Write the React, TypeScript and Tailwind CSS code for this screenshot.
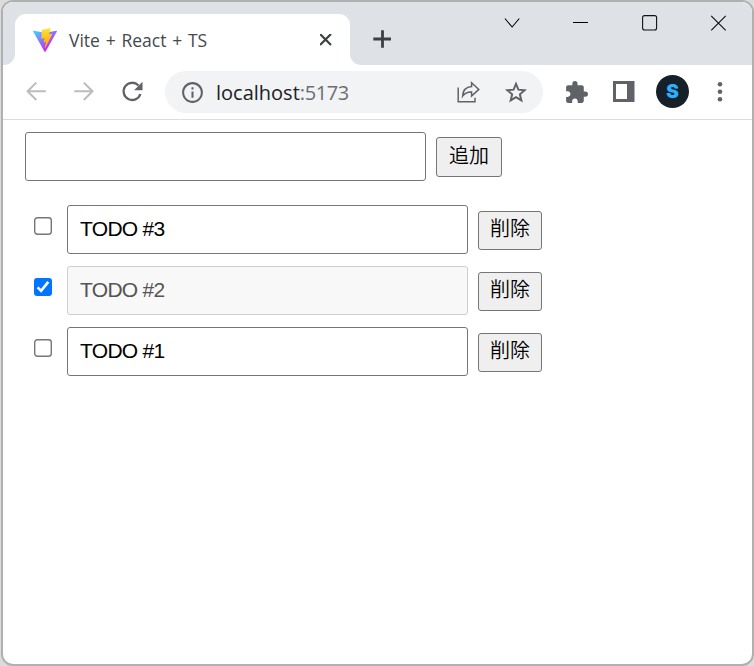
import { useState } from "react";
import { clsx } from "clsx";
import { MdExtension, MdInfoOutline } from "react-icons/md";

interface Todo {
  id: number;
  value: string;
  checked: boolean;
}

const initialTodos: Todo[] = [
  { id: 3, value: "TODO #3", checked: false },
  { id: 2, value: "TODO #2", checked: true },
  { id: 1, value: "TODO #1", checked: false },
];

function ViteLogo() {
  return (
    <svg className="ml-[18px] h-6 w-6 shrink-0" viewBox="0 0 256 257">
      <defs>
        <linearGradient id="viteBlue" x1="-.8%" x2="57.6%" y1="7.7%" y2="78.4%">
          <stop offset="0%" stopColor="#41D1FF" />
          <stop offset="100%" stopColor="#BD34FE" />
        </linearGradient>
        <linearGradient id="viteBolt" x1="43.4%" x2="50.3%" y1="2.2%" y2="89%">
          <stop offset="0%" stopColor="#FFEA83" />
          <stop offset="8.3%" stopColor="#FFDD35" />
          <stop offset="100%" stopColor="#FFA800" />
        </linearGradient>
      </defs>
      <path
        fill="url(#viteBlue)"
        d="M255.153 37.938L134.897 252.976c-2.483 4.44-8.862 4.466-11.382.048L.875 37.958c-2.746-4.814 1.371-10.646 6.827-9.67l120.385 21.517a6.537 6.537 0 0 0 2.322-.004l117.867-21.483c5.438-.991 9.574 4.796 6.877 9.62Z"
      />
      <path
        fill="url(#viteBolt)"
        d="M185.432.063L96.44 17.501a3.268 3.268 0 0 0-2.634 3.014l-5.474 92.456a3.268 3.268 0 0 0 3.997 3.378l24.777-5.718c2.318-.535 4.413 1.507 3.936 3.838l-7.361 36.047c-.495 2.426 1.782 4.5 4.151 3.78l15.304-4.649c2.372-.72 4.652 1.36 4.15 3.788l-11.698 56.621c-.732 3.542 3.979 5.473 5.943 2.437l1.313-2.028l72.516-144.72c1.215-2.423-.88-5.186-3.54-4.672l-25.505 4.922c-2.396.462-4.435-1.77-3.759-4.114l16.646-57.705c.677-2.35-1.37-4.583-3.769-4.113Z"
      />
    </svg>
  );
}

function TabBar() {
  return (
    <div className="flex h-[63px] bg-white">
      <div className="w-3 rounded-br-[11px] bg-[#dee1e6]" />
      <div className="w-[335px] bg-[#dee1e6] pt-3">
        <div className="flex h-full items-center rounded-t-[11px] bg-white">
          <ViteLogo />
          <span className="ml-3 w-[240px] whitespace-pre font-['Open_Sans',sans-serif] text-[17.5px] leading-6 text-[#45494d] [word-spacing:1.2px]">
            Vite + React + TS
          </span>
          <svg className="ml-[11px] h-3 w-3" viewBox="0 0 12 12">
            <path d="M0 0l11 11M11 0L0 11" stroke="#3c4043" strokeWidth="2.2" />
          </svg>
        </div>
      </div>
      <div className="flex flex-1 justify-between rounded-bl-[11px] bg-[#dee1e6]">
        <svg className="ml-[23px] mt-7 h-[18px] w-[18px]" viewBox="0 0 18 18">
          <path d="M9.5.2v17.6M.3 9h17.8" stroke="#3c4043" strokeWidth="2.8" />
        </svg>
        <div className="mr-[25px] mt-[13px] flex gap-[53px]">
          <svg className="h-4 w-4" viewBox="0 0 16 16" fill="none" stroke="#000" strokeWidth="1.1">
            <path d="M.9 3.500l7.200 8.500 7.200-8.500" />
          </svg>
          <svg className="h-4 w-4" viewBox="0 0 16 16" fill="none" stroke="#000">
            <path d="M0 7.500h15" />
          </svg>
          <svg className="h-4 w-4" viewBox="0 0 16 16" fill="none" stroke="#111">
            <rect x=".6" y=".6" width="14" height="14.400" rx="2" strokeWidth="1.1" />
          </svg>
          <svg className="h-4 w-4" viewBox="0 0 16 16" fill="none" stroke="#111" strokeWidth="1.1">
            <path d="M.2 .8l14.500 14.500M14.700 .8L.2 15.300" />
          </svg>
        </div>
      </div>
    </div>
  );
}

function Toolbar() {
  return (
    <div className="flex h-[55px] items-center border-b border-[#dadce0] bg-white text-[#5f6368]">
      <svg className="ml-[23px] h-5 w-5" viewBox="0 0 20 20" fill="none" stroke="#babcbe" strokeWidth="2">
        <path d="M19.800 9.300H1.800M10.300.6L1.600 9.300l8.700 8.700" />
      </svg>
      <svg className="ml-7 h-5 w-5" viewBox="0 0 20 20" fill="none" stroke="#babcbe" strokeWidth="2">
        <path d="M.3 9.300h18M9.800.6l8.700 8.700-8.700 8.700" />
      </svg>
      <svg className="ml-[27px] h-[22px] w-[22px]" viewBox="0 0 22 22">
        <path
          d="M19.400 13A8.600 8.600 0 1 1 17.500 4.500"
          fill="none"
          stroke="#5f6368"
          strokeWidth="2.3"
        />
        <path d="M21.500 .8v8.400h-8.400z" fill="#5f6368" />
      </svg>
      <div className="ml-[22px] flex h-[42px] w-[378px] items-center rounded-full bg-[#f1f3f4]">
        <MdInfoOutline className="ml-[15px] h-[25px] w-[25px]" />
        <span className="ml-[11px] mt-0.5 w-[240px] font-['Open_Sans',sans-serif] text-[20px] leading-7 text-[#202124]">
          localhost<span className="tracking-[-0.4px] text-[#6b6f74]">:5173</span>
        </span>
        <svg className="h-6 w-6" viewBox="0 0 24 24" fill="none" stroke="#5f6368" strokeWidth="1.5">
          <path d="M2.200 7.500v14.300h16.800v-4" />
          <path d="M15.600 2.800l7.200 6.600-7.200 6.600v-4c-4-.2-6.800 1-9 4.200C6.900 10.900 10.100 7 15.600 6.600z" />
        </svg>
        <svg className="ml-6 h-[23px] w-[23px]" viewBox="0 0 22 22">
          <path
            d="M11.500 2.700l2.300 5.600 6 .5-4.600 3.900 1.400 5.900-5.100-3.100-5.100 3.100 1.400-5.900L3.200 8.800l6-.5z"
            fill="none"
            stroke="#5f6368"
            strokeWidth="1.900"
          />
        </svg>
      </div>
      <MdExtension className="ml-[21px] h-[25px] w-[25px]" />
      <svg className="ml-6 h-[22px] w-[22px]" viewBox="0 0 22 22">
        <path fill="#5f6368" fillRule="evenodd" d="M0 0h21.500v21H0zM3 3v15h11V3z" />
      </svg>
      <div className="mb-px ml-[21px] flex h-[33px] w-[33px] items-center justify-center rounded-full bg-[#162028] font-['Inter',sans-serif] text-[19px] font-black leading-none text-[#29b1ff]">
        S
      </div>
      <svg className="ml-7 h-[22px] w-[6px]" viewBox="0 0 6 22" fill="#5f6368">
        <circle cx="3" cy="3.200" r="2.300" />
        <circle cx="3" cy="10.700" r="2.300" />
        <circle cx="3" cy="18.200" r="2.300" />
      </svg>
    </div>
  );
}

interface TextBoxProps {
  value: string;
  disabled?: boolean;
  onChange: (value: string) => void;
}

function TextBox({ value, disabled, onChange }: TextBoxProps) {
  return (
    <input
      type="text"
      value={value}
      disabled={disabled}
      onChange={(e) => onChange(e.target.value)}
      className={clsx(
        "h-[49px] w-[401px] rounded-[3px] border px-3 pb-0.5 font-['Liberation_Sans',sans-serif] text-[21px] tracking-[-0.7px] outline-none",
        disabled
          ? "border-[#cfcfcf] bg-[#f8f8f8] text-[#545454]"
          : "border-[#767676] bg-white text-black"
      )}
    />
  );
}

function Checkbox({ checked, onChange }: { checked: boolean; onChange: () => void }) {
  return (
    <button
      role="checkbox"
      aria-checked={checked}
      onClick={onChange}
      className="mt-3 h-[18px] w-[18px]"
    >
      <svg viewBox="0 0 18 18" fill="none">
        {checked ? (
          <>
            <rect width="18" height="18" rx="3" fill="#0075ff" />
            <path d="M3.600 9.400l3.500 3.500L14.300 3.900" stroke="#fff" strokeWidth="2.600" />
          </>
        ) : (
          <rect x=".7" y=".7" width="16.600" height="16.600" rx="2.700" stroke="#767676" strokeWidth="1.400" />
        )}
      </svg>
    </button>
  );
}

export default function App() {
  const [text, setText] = useState("");
  const [todos, setTodos] = useState<Todo[]>(initialTodos);

  const handleAdd = () => {
    if (!text) return;
    setTodos([{ id: Date.now(), value: text, checked: false }, ...todos]);
    setText("");
  };

  const handleEdit = (id: number, value: string) => {
    setTodos(todos.map((todo) => (todo.id === id ? { ...todo, value } : todo)));
  };

  const handleCheck = (id: number) => {
    setTodos(
      todos.map((todo) =>
        todo.id === id ? { ...todo, checked: !todo.checked } : todo
      )
    );
  };

  return (
    <div className="h-screen bg-[#dcdcdc] pl-px">
      <div className="flex h-full flex-col overflow-hidden rounded-xl border-2 border-[#b0b0b0] bg-white">
        <TabBar />
        <Toolbar />
        <main className="flex-1 pl-[22px] pt-3">
          <div className="flex items-start gap-[10px]">
            <TextBox value={text} onChange={setText} />
            <button
              onClick={handleAdd}
              className="mt-[5px] h-10 w-[66px] rounded-[3px] border border-[#767676] bg-[#efefef] pb-1 font-['Noto_Sans_CJK_JP',sans-serif] text-[20px] font-[350] leading-none text-black"
            >
              追加
            </button>
          </div>
          <ul className="mt-6 flex flex-col gap-3 pl-[9px]">
            {todos.map((todo) => (
              <li key={todo.id} className="flex items-start">
                <Checkbox checked={todo.checked} onChange={() => handleCheck(todo.id)} />
                <div className="ml-[15px] flex items-start gap-[10px]">
                  <TextBox
                    value={todo.value}
                    disabled={todo.checked}
                    onChange={(value) => handleEdit(todo.id, value)}
                  />
                  <button
                    onClick={() => setTodos(todos.filter((t) => t.id !== todo.id))}
                    className="mt-1.5 h-[39px] w-16 rounded-[3px] border border-[#767676] bg-[#efefef] pb-1.5 font-['Noto_Sans_CJK_JP',sans-serif] text-[20px] font-[350] leading-none text-black"
                  >
                    削除
                  </button>
                </div>
              </li>
            ))}
          </ul>
        </main>
      </div>
    </div>
  );
}
